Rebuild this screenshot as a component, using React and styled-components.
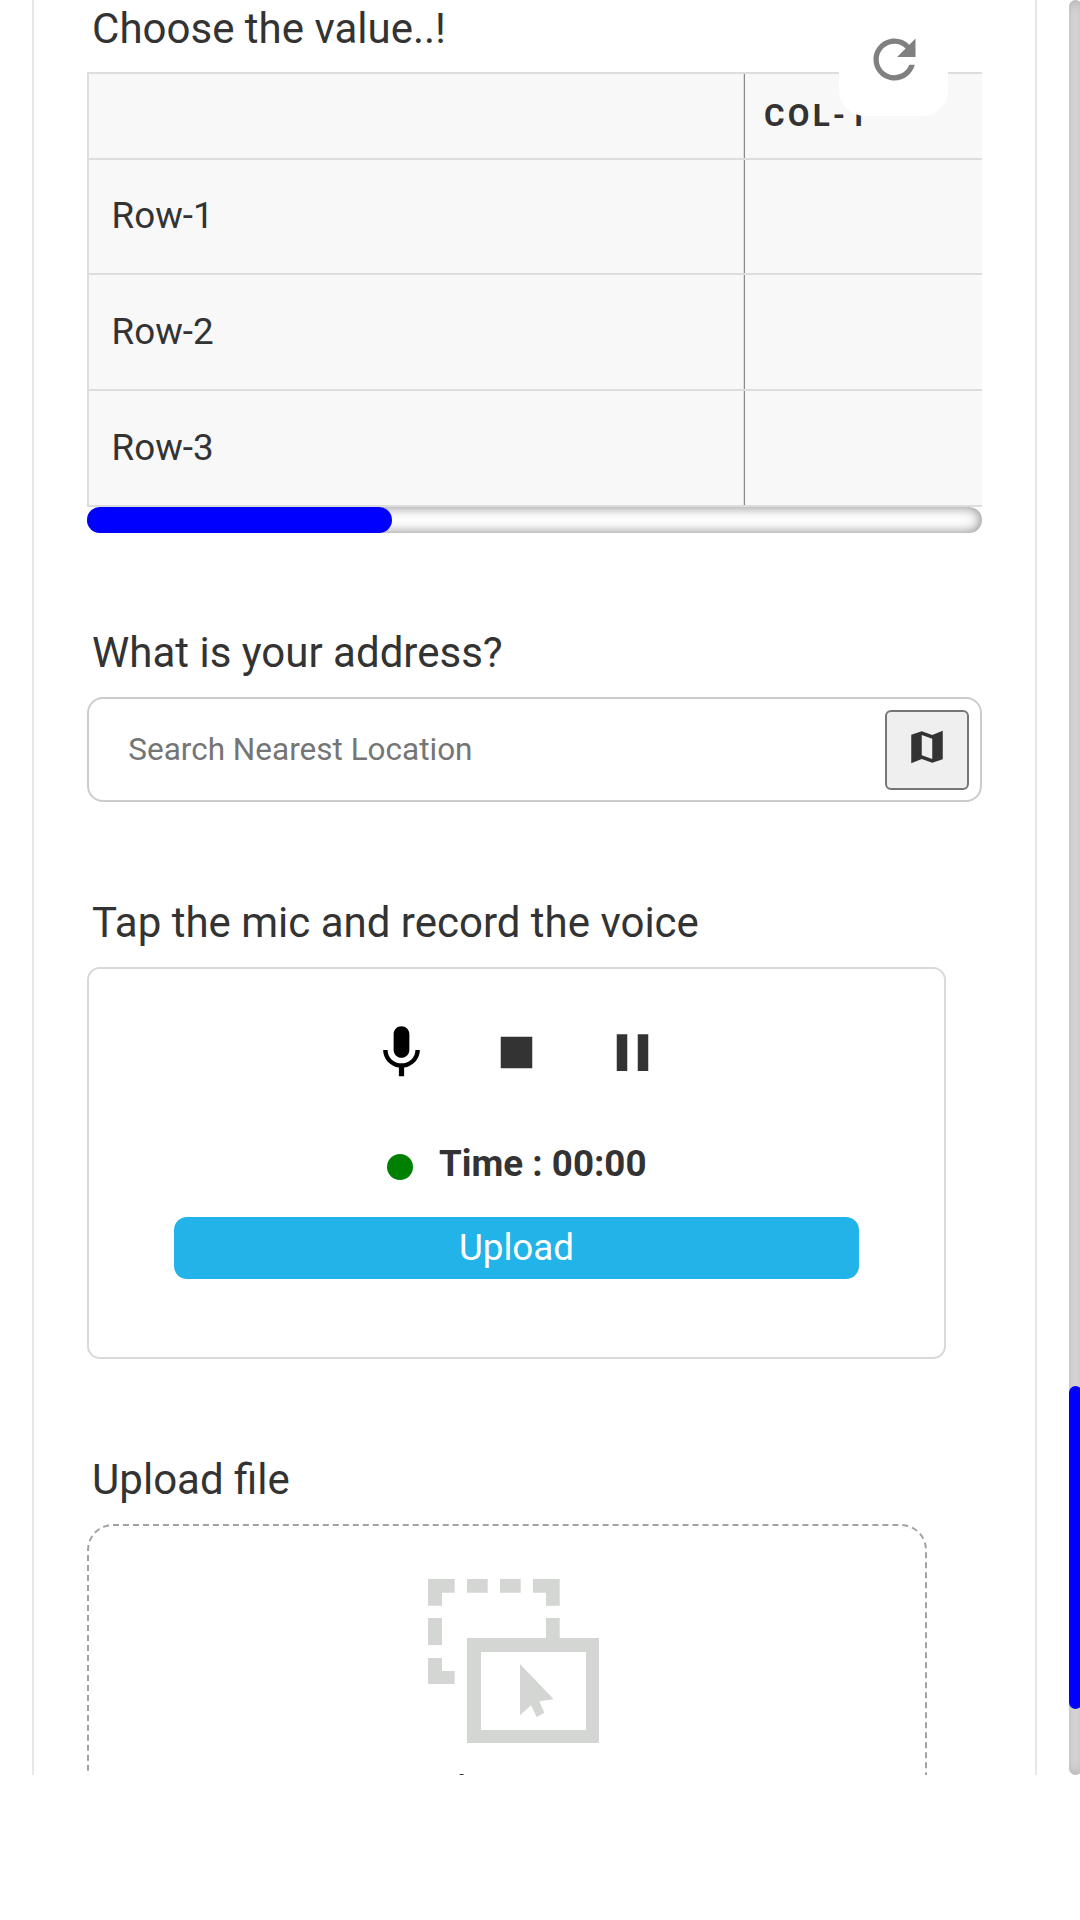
import React from "react";
import styled, { createGlobalStyle } from "styled-components";

const GlobalStyle = createGlobalStyle`
  *, *::before, *::after { box-sizing: border-box; }
  body { margin: 0; background: #fff; color: #333; font-family: Roboto, "Liberation Sans", sans-serif; }
`;

const Viewport = styled.div`
  position: relative;
  display: flex;
  justify-content: space-between;
  width: 1080px;
  height: 1775px;
  overflow: hidden;
`;

const FormCard = styled.main`
  width: 1005px;
  margin-left: 32px;
  padding: 4px 53px 0;
  border: solid #e8e8e8;
  border-width: 0 2px;
`;

const Question = styled.section`
  display: flex;
  flex-direction: column;
  align-items: flex-start;
  gap: ${(p) => p.$gap}px;
  margin-bottom: ${(p) => p.$space}px;
`;

const Title = styled.h2`
  margin: 0;
  padding-left: 5.1px;
  font-size: 42px;
  line-height: 49px;
  font-weight: 400;
`;

const Matrix = styled.div`
  width: 895px;
`;

const MatrixGrid = styled.div`
  border-left: 2px solid #ddd;
  border-top: 2px solid #ddd;
  background: #f8f8f8;
`;

const MatrixRow = styled.div`
  display: grid;
  grid-template-columns: 656px 1fr;
  height: ${(p) => p.$height}px;
  border-bottom: 2px solid #ddd;
`;

const RowLabel = styled.div`
  display: flex;
  align-items: center;
  padding: 0 0 2px 22.6px;
  border-right: 1px solid #888;
  box-shadow: inset -1px 0 #ddd;
  font-size: 36.75px;
`;

const ColumnLabel = styled.div`
  display: flex;
  align-items: center;
  padding: 0 0 2px 19px;
  font-size: 31.5px;
  font-weight: 700;
  letter-spacing: 3.15px;
`;

const ScrollTrack = styled.div`
  height: 26px;
  border-radius: 13px;
  box-shadow: inset 0 0 13px grey;
`;

const ScrollThumb = styled.div`
  width: 305px;
  height: 26px;
  border-radius: 13px;
  background: #00f;
`;

const ResetButton = styled.button`
  position: absolute;
  top: 3px;
  left: 839px;
  display: flex;
  align-items: center;
  width: 109px;
  height: 113px;
  padding: 0 0 0 23.5px;
  border: 0;
  border-radius: 26px;
  background: #fff;
  color: #808080;
`;

const SearchBox = styled.div`
  display: flex;
  align-items: center;
  width: 895px;
  height: 105px;
  padding: 0 11px 0 39.3px;
  border: 2px solid #ccc;
  border-radius: 16px;
`;

const SearchInput = styled.input`
  flex: 1;
  min-width: 0;
  padding: 0;
  border: 0;
  background: transparent;
  font: 400 31.5px Roboto, sans-serif;
  &::placeholder { color: #757575; opacity: 1; }
`;

const MapButton = styled.button`
  display: flex;
  justify-content: center;
  align-items: flex-start;
  width: 84px;
  height: 80px;
  margin-top: 1px;
  padding: 14px 0 0;
  border: 2px solid #767676;
  border-radius: 6px;
  background: #efefef;
  color: #333;
`;

const Recorder = styled.div`
  display: flex;
  flex-direction: column;
  align-items: center;
  width: 859px;
  height: 392px;
  padding-top: 52px;
  border: 2px solid #d9d9d9;
  border-radius: 13px;
`;

const Controls = styled.div`
  display: flex;
  gap: 52.5px;
`;

const ControlIcon = styled.svg`
  display: block;
  width: ${(p) => p.$size}px;
  height: ${(p) => p.$size}px;
  fill: ${(p) => p.$color || "currentColor"};
`;

const TimerRow = styled.div`
  display: flex;
  align-items: center;
  align-self: flex-start;
  gap: 26px;
  height: 44px;
  margin: 57px 0 0 298px;
`;

const StatusDot = styled.span`
  width: 26px;
  height: 26px;
  margin-top: 8px;
  border-radius: 50%;
  background: green;
`;

const Time = styled.span`
  font-size: 36.75px;
  font-weight: 700;
`;

const UploadButton = styled.button`
  width: 685px;
  height: 62px;
  margin-top: 32px;
  padding: 0 0 1px;
  border: 0;
  border-radius: 13px;
  background: #22b4e9;
  color: #fff;
  font: 400 36.75px Roboto, sans-serif;
`;

const DropZone = styled.div`
  width: 840px;
  height: 420px;
  padding: 53px 0 0 339px;
  border: 2px dashed #a2a2a2;
  border-radius: 26px;
`;

const DropIcon = styled.svg`
  display: block;
  width: 171px;
  height: 164.33px;
  fill: #d4d6d3;
`;

const DropText = styled.div`
  margin: 23.7px 0 0 1.5px;
  font-size: 42px;
  line-height: 49px;
`;

const PageTrack = styled.div`
  flex: none;
  width: 13px;
  height: 1775px;
  margin-right: -2px;
  padding-top: 1386px;
  border-radius: 6.5px;
  background: #e4e4e4;
  box-shadow: inset 0 0 13px rgba(128, 128, 128, 0.55);
`;

const PageThumb = styled.div`
  width: 13px;
  height: 323px;
  border-radius: 6.5px;
  background: #00f;
`;

const Icon = ({ d, size = 63, color }) => (
  <ControlIcon viewBox="0 0 24 24" $size={size} $color={color} aria-hidden="true">
    <path d={d} />
  </ControlIcon>
);

const icons = {
  refresh:
    "M17.65 6.35A7.958 7.958 0 0 0 12 4c-4.42 0-7.99 3.58-7.99 8s3.57 8 7.99 8c3.73 0 6.84-2.55 7.73-6h-2.08A5.99 5.99 0 0 1 12 18c-3.31 0-6-2.69-6-6s2.69-6 6-6c1.66 0 3.14.69 4.22 1.78L13 11h7V4l-2.35 2.35z",
  map: "M15 5.1 9 3 3 5.02v16.2l6-2.33 6 2.1 6-2.02V2.77L15 5.1zm0 13.79-6-2.11V5.11l6 2.11v11.67z",
  mic: "M12 14c1.66 0 2.99-1.34 2.99-3L15 5c0-1.66-1.34-3-3-3S9 3.34 9 5v6c0 1.66 1.34 3 3 3zm5.3-3c0 3-2.54 5.1-5.3 5.1S6.7 14 6.7 11H5c0 3.41 2.72 6.23 6 6.72V21h2v-3.28c3.28-.48 6-3.3 6-6.72h-1.7z",
  stop: "M6 6h12v12H6z",
  pause: "M6 19h4V5H6v14zm8-14v14h4V5h-4z",
};

const rows = [
  { label: "Row-1", height: 115 },
  { label: "Row-2", height: 116 },
  { label: "Row-3", height: 116 },
];

export default function App() {
  return (
    <>
      <GlobalStyle />
      <Viewport>
        <FormCard>
          <Question $gap={19} $space={95}>
            <Title>Choose the value..!</Title>
            <Matrix>
              <MatrixGrid>
                <MatrixRow $height={86}>
                  <RowLabel />
                  <ColumnLabel>COL-1</ColumnLabel>
                </MatrixRow>
                {rows.map((row) => (
                  <MatrixRow key={row.label} $height={row.height}>
                    <RowLabel>{row.label}</RowLabel>
                    <div />
                  </MatrixRow>
                ))}
              </MatrixGrid>
              <ScrollTrack>
                <ScrollThumb />
              </ScrollTrack>
            </Matrix>
          </Question>

          <Question $gap={20} $space={96}>
            <Title>What is your address?</Title>
            <SearchBox>
              <SearchInput placeholder="Search Nearest Location" />
              <MapButton aria-label="Map">
                <Icon d={icons.map} size={42} />
              </MapButton>
            </SearchBox>
          </Question>

          <Question $gap={20} $space={96}>
            <Title>Tap the mic and record the voice</Title>
            <Recorder>
              <Controls>
                <Icon d={icons.mic} color="#000" />
                <Icon d={icons.stop} />
                <Icon d={icons.pause} />
              </Controls>
              <TimerRow>
                <StatusDot />
                <Time>Time : 00:00</Time>
              </TimerRow>
              <UploadButton>Upload</UploadButton>
            </Recorder>
          </Question>

          <Question $gap={20} $space={0}>
            <Title>Upload file</Title>
            <DropZone>
              <DropIcon viewBox="84 87 513 493" aria-hidden="true">
                <path d="M84 87h80v41h-38v39H84zM201 87h62v41h-62zM300 87h62v41h-62zM399 87h80v80h-41v-39h-39zM84 204h42v81H84zM438 204h41v61h-41zM84 324h42v39h38v39H84z" />
                <path fillRule="evenodd" d="M201 264h396v316H201zM243 306v234h315V306z" />
                <path d="M360 342 461 448 418 454 433 488 410 501 393 466 360 496z" />
              </DropIcon>
              <DropText>Choose</DropText>
            </DropZone>
          </Question>
        </FormCard>
        <PageTrack>
          <PageThumb />
        </PageTrack>
        <ResetButton aria-label="Reset">
          <Icon d={icons.refresh} />
        </ResetButton>
      </Viewport>
    </>
  );
}
